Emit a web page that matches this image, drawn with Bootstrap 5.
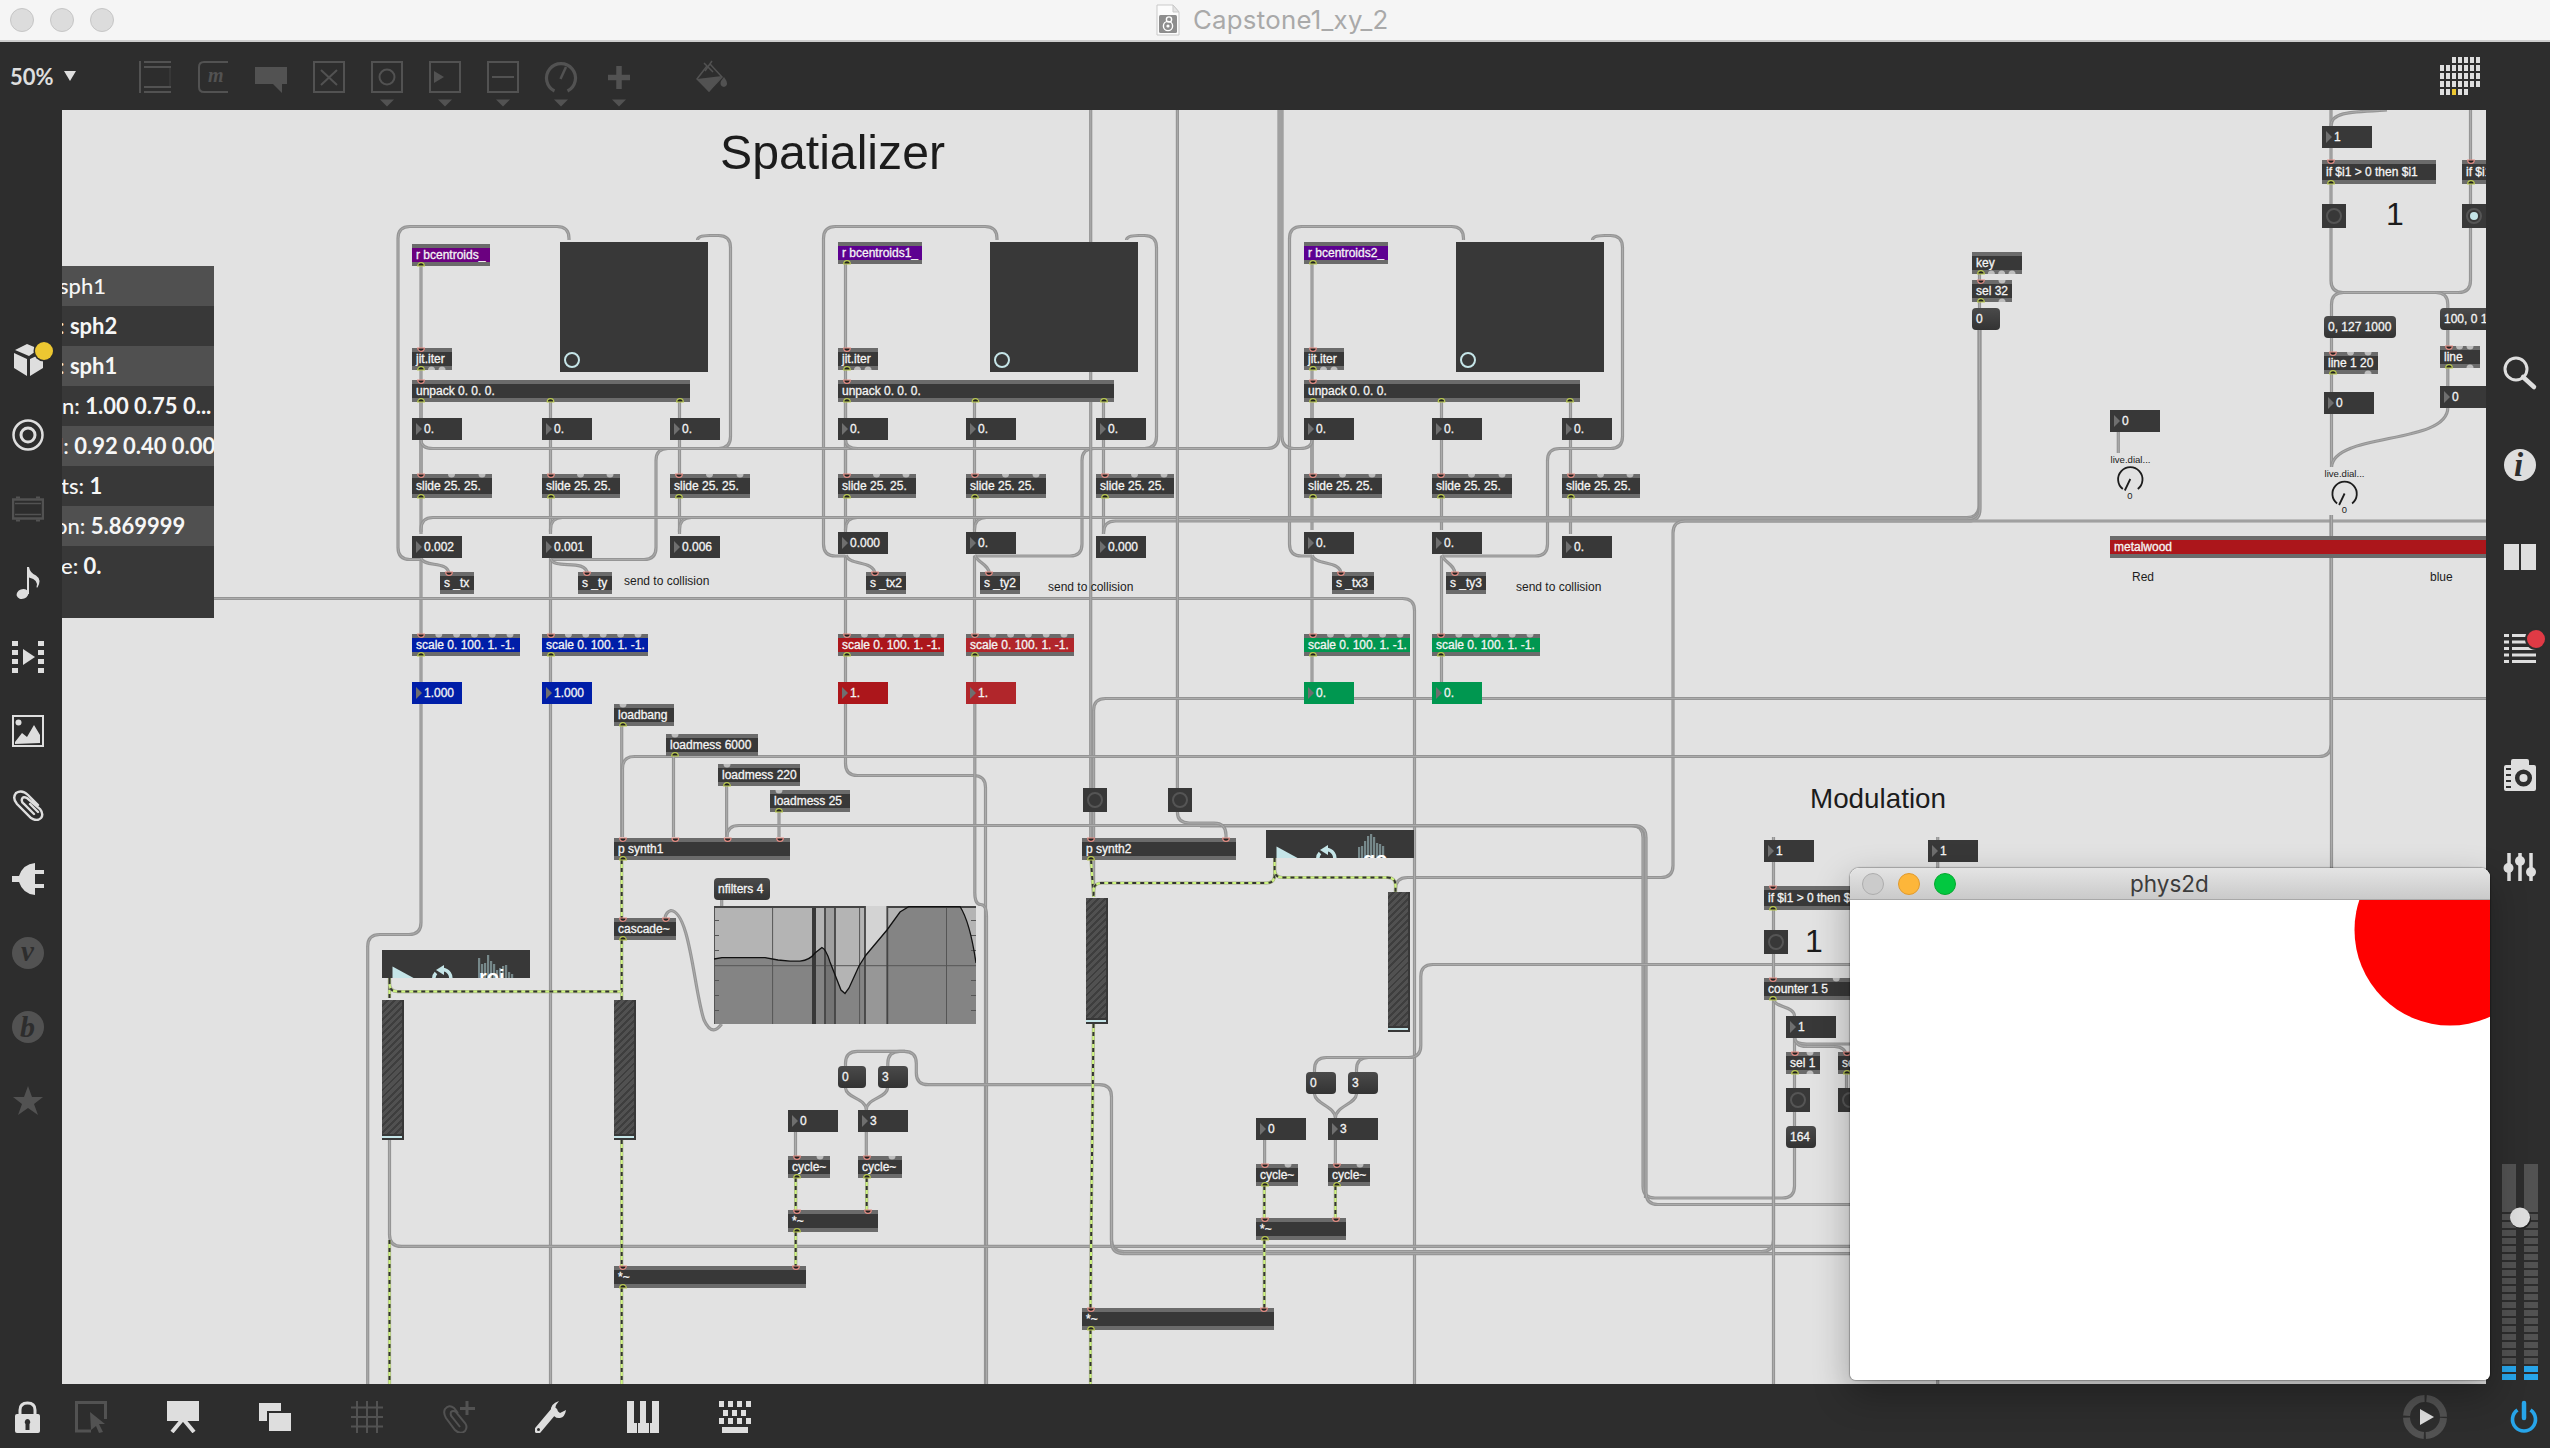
<!DOCTYPE html>
<html lang="en">
<head>
<meta charset="utf-8">
<title>Capstone1_xy_2</title>
<link rel="stylesheet" href="https://cdn.jsdelivr.net/npm/bootstrap@5.3.0/dist/css/bootstrap.min.css">
<script src="https://cdn.jsdelivr.net/npm/bootstrap@5.3.0/dist/js/bootstrap.bundle.min.js"></script>
<style>
  html, body { height: 100%; }
  body { background: #2d2d2d; font-family: "Liberation Sans", Arial, sans-serif; overflow: hidden; }
  svg { display: block; flex: none; }
  .lite { color: #dedede; }
  .dim { color: #525252; }
  .titlebar { height: 42px; background: #f5f5f5; border-bottom: 2px solid #cdcdcd; padding: 0 10px; }
  .light { width: 24px; height: 24px; border-radius: 50%; background: #dcdcdc; border: 1px solid #c6c6c6; }
  .doc-name { font: 400 25.800px "Inter", sans-serif; color: #a9a9a9; line-height: 40px; letter-spacing: .25px; }
  .title-lights { width: 1145px; gap: 16px; }
  .toolbar { height: 68px; padding-left: 10px; padding-right: 70px; }
  .zoom-label { font: 700 22px "Lato", sans-serif; color: #dedede; width: 54px; }
  .tool-icons { gap: 26px; margin-left: 63px; }
  .tool-icons svg { overflow: visible; }
  .bucket { margin-left: 34px; }
  .left-rail { width: 62px; padding-top: 235px; padding-left: 12px; gap: 42px; }
  .right-rail { width: 64px; padding-left: 18px; }
  .bottombar { height: 64px; padding-left: 12px; padding-right: 10px; padding-top: 2px; }
  .bottom-icons { gap: 60px; }
  .lock-icon { margin-right: -29px; }
  .power-icon { margin-left: 63px; }
  .patcher { background: #e2e2e2; overflow: hidden; }
  .obj { position: absolute; color: #f4f4f4; font-size: 12px; line-height: 14px; white-space: pre; background: #383838; border-top: 4px solid #6b6b6b; border-bottom: 4px solid #6b6b6b; padding-left: 4px; -webkit-text-stroke: .3px #f4f4f4; overflow: hidden; }
  .obj.tall { line-height: 16px; }
  .num { position: absolute; height: 22px; width: 50px; color: #f4f4f4; font-size: 12px; line-height: 22px; padding-left: 12px; background: #383838; -webkit-text-stroke: .3px #f4f4f4; }
  .num::before { content: ""; position: absolute; left: 4px; top: 5px; border-left: 6px solid #6f6f6f; border-top: 6px solid transparent; border-bottom: 6px solid transparent; }
  .msg { position: absolute; height: 22px; color: #f4f4f4; font-size: 12px; line-height: 22px; padding-left: 4px; border-radius: 4px; background: linear-gradient(#4a4a4a, #333); white-space: pre; -webkit-text-stroke: .3px #f4f4f4; }
  .bang { position: absolute; width: 24px; height: 24px; background: #383838; }
  .bang::before { content: ""; position: absolute; inset: 4px; border: 2px solid #555; border-radius: 50%; }
  .bang.lit::after { content: ""; position: absolute; inset: 8px; background: #c5e5e8; border-radius: 50%; }
  .pad { position: absolute; width: 148px; height: 130px; background: #383838; }
  .pad::before { content: ""; position: absolute; left: 4px; bottom: 4px; width: 16px; height: 16px; border: 2px solid #c5e5e8; border-radius: 50%; }
  .gain { position: absolute; width: 22px; background: #383838; }
  .gain::before { content: ""; position: absolute; left: 0; top: 0; width: 20px; bottom: 6px; background: repeating-linear-gradient(135deg, #515151 0 3px, #3e3e3e 3px 5px); }
  .gain::after { content: ""; position: absolute; left: 0; bottom: 2px; width: 20px; height: 2px; background: #c5e5e8; }
  .note { position: absolute; color: #1c1c1c; white-space: pre; line-height: 1; }
  .purple { background: #6b0080; } .violet { background: #5d0091; }
  .blue { background: #001ea8; } .red { background: #ac161b; } .red2 { background: #b1262b; } .green { background: #009750; }
  .layer { position: absolute; left: 0; top: 0; }
  .attrs { position: absolute; left: 0; top: 156px; width: 152px; height: 352px; background: #383838; overflow: hidden; font: 700 22px/40px "Lato", sans-serif; color: #f6f6f6; }
  .attrs > div { height: 40px; white-space: pre; }
  .attrs > div:nth-child(odd) { background: #505050; }
  .attrs > div:last-child { background: none; }
  .attrs i { font-style: normal; font-weight: 500; }
  .attrs span { display: inline-block; margin-left: -3px; }
  .attrs .cut-0 { margin-left: 0; } .attrs .cut-1 { margin-left: -1px; } .attrs .cut-4 { margin-left: -4px; } .attrs .cut-7 { margin-left: -7px; }
  .sub-window { position: absolute; left: 1850px; top: 868px; width: 640px; height: 512px; background: #fff; border-radius: 9px 9px 6px 6px; overflow: hidden; }
  .win-shadow { position: absolute; left: 1850px; top: 868px; width: 640px; height: 512px; border-radius: 9px 9px 6px 6px; box-shadow: 0 14px 36px rgba(0,0,0,.3), 0 0 1px 1px rgba(0,0,0,.25); }
  .sub-title { height: 32px; background: linear-gradient(#e4e4e4, #cacaca); border-bottom: 1px solid #a8a8a8; padding-left: 12px; gap: 14px; }
  .sub-title .light { width: 22px; height: 22px; background: #cbcbcb; border-color: #adadad; }
  .sub-title .light.amber { background: #fdb63a; border-color: #e09a2e; }
  .sub-title .light.go { background: #02c840; border-color: #06a82f; }
  .sub-name { font: 400 22.5px "Inter", sans-serif; color: #3c3c3c; margin-left: 160px; line-height: 30px; }
</style>
</head>
<body class="d-flex flex-column">

<header class="titlebar d-flex align-items-center flex-shrink-0">
  <div class="title-lights d-flex"><span class="light"></span><span class="light"></span><span class="light"></span></div>
  <svg width="26" height="32" viewBox="0 0 26 32" class="ms-0"><path d="M2 1h16l6 7v23H2z" fill="#fcfcfc" stroke="#c9c9c9"/><path d="M18 1v7h6z" fill="#e4e4e4" stroke="#c9c9c9"/><rect x="4" y="11" width="18" height="18" rx="1.500" fill="#8e8e8e"/><g fill="none" stroke="#fff" stroke-width="1.400"><circle cx="13" cy="22" r="4.600"/><circle cx="14" cy="15.500" r="2.600"/></g><circle cx="13" cy="22" r="1.600" fill="#fff"/></svg>
  <span class="doc-name ms-2 ps-1">Capstone1_xy_2</span>
</header>

<nav class="toolbar d-flex align-items-center flex-shrink-0">
  <span class="zoom-label">50%</span>
  <svg width="12" height="10" class="lite"><path d="M0 0h12L6 10z" fill="currentColor"/></svg>
  <div class="tool-icons d-flex dim">
    <svg width="32" height="47" viewBox="0 -8 32 47" fill="none" stroke="currentColor" stroke-width="2"><path d="M1 0v32M5 1h27M5 6h27M5 26h27M5 31h27" /><path d="M31 6v20" stroke-width=".6"/></svg>
    <svg width="32" height="47" viewBox="0 -8 32 47"><path d="M31 1H7Q2 1 2 6v20q0 5 5 5h24" fill="none" stroke="currentColor" stroke-width="2"/><text x="11" y="21" font-family="Liberation Serif, serif" font-style="italic" font-weight="700" font-size="20" fill="currentColor">m</text></svg>
    <svg width="32" height="47" viewBox="0 -8 32 47" fill="currentColor"><path d="M0 6h32v17h-5v9l-9-9H0z"/></svg>
    <svg width="32" height="47" viewBox="0 -8 32 47" fill="none" stroke="currentColor" stroke-width="2"><path d="M1 1h30v30H1zM8 9l16 15M24 9L8 24"/></svg>
    <svg width="32" height="47" viewBox="0 -8 32 47" fill="none" stroke="currentColor" stroke-width="2"><path d="M1 1h30v30H1z"/><circle cx="16" cy="16" r="7.500"/></svg>
    <svg width="32" height="47" viewBox="0 -8 32 47" fill="none" stroke="currentColor" stroke-width="2"><path d="M1 1h30v30H1z"/><path d="M5 10l10 6-10 6z" fill="currentColor" stroke="none"/></svg>
    <svg width="32" height="47" viewBox="0 -8 32 47" fill="none" stroke="currentColor" stroke-width="2"><path d="M1 1h30v30H1zM5 16h22"/></svg>
    <svg width="32" height="47" viewBox="0 -8 32 47" fill="none" stroke="currentColor"><path d="M9.500 30A14.500 14.500 0 1 1 22.500 30" stroke-width="3.200"/><path d="M15.500 18L21 6" stroke-width="2.500"/></svg>
    <svg width="32" height="47" viewBox="0 -8 32 47"><path d="M16 5v23M5 16.500h22" stroke="currentColor" stroke-width="5.500"/></svg>
    <svg class="bucket" width="34" height="47" viewBox="0 -8 34 47"><path d="M12 5L2 18l12 12 13-14L15 3" fill="none" stroke="currentColor" stroke-width="1.500"/><path d="M2 18l25-3-13 16zM29 16q6 8 0 10-5-1-3-6z" fill="currentColor"/><path d="M9 2l9 9M17 0l-7 10" stroke="currentColor" stroke-width="1.500"/></svg>
  </div>
  <svg class="ms-auto" width="40" height="38" id="calendar"></svg>
</nav>

<div class="d-flex flex-grow-1" style="min-height:0">
  <aside class="left-rail d-flex flex-column flex-shrink-0 lite">
    <svg width="42" height="32" viewBox="0 0 42 32" overflow="visible"><path d="M2 8l13 6v17L2 23zM18 14l13-6v15l-13 8zM3 5l12-6 12 5-10 7z" fill="currentColor"/><circle cx="32" cy="6" r="10.500" fill="#2d2d2d"/><circle cx="32" cy="6" r="9" fill="#ecc731"/></svg>
    <svg width="32" height="32" fill="none" stroke="currentColor"><circle cx="16" cy="16" r="14.500" stroke-width="2.500"/><circle cx="16" cy="16" r="7" stroke-width="3"/></svg>
    <svg width="32" height="32" class="dim" fill="none" stroke="currentColor"><path d="M1 6.500h30v19H1z" stroke-width="2.500"/><path d="M3 10.500h26M3 21.500h26" stroke-width="1.500"/><path d="M4 4.500h4M24 4.500h4M4 27.500h4M24 27.500h4" stroke-width="2"/></svg>
    <svg width="32" height="32" fill="currentColor"><ellipse cx="10.500" cy="27" rx="6" ry="4.800" transform="rotate(-20 10.500 27)"/><path d="M15 27V0h2q1 6 7 8.500 6 4 1.500 12-.5.300-1-.3Q27 13 17 10.500V27z"/></svg>
    <svg width="32" height="32" fill="currentColor"><path d="M0 0h6v5H0zM0 9h6v5H0zM0 18h6v5H0zM0 27h6v5H0zM26 0h6v5h-6zM26 9h6v5h-6zM26 18h6v5h-6zM26 27h6v5h-6zM11 8l12 8-12 8z"/></svg>
    <svg width="32" height="32"><path d="M1 1h30v30H1z" fill="none" stroke="currentColor" stroke-width="2"/><path d="M3 29V27l7-9 5 4 7-12 6 10v8z" fill="currentColor"/><circle cx="6.500" cy="7.500" r="3" fill="currentColor"/></svg>
    <svg width="32" height="32" fill="none" stroke="currentColor" stroke-width="2.400" stroke-linecap="round"><path d="M26 16L16 6Q10 0 4 4q-4 5 1 11l14 14q6 4 10 0 3-4-1-9L15 9q-4-2-5 1-1 3 2 5l10 10M18 15l8 8"/></svg>
    <svg width="32" height="32" fill="currentColor"><path d="M0 13h7Q11 1 23 0v7h9v4h-9v10h9v4h-9v7Q11 31 7 19H0z"/></svg>
    <svg width="32" height="32" class="dim"><circle cx="16" cy="16" r="16" fill="currentColor"/><text x="9" y="24" font-family="Liberation Serif, serif" font-style="italic" font-weight="700" font-size="29" fill="#2d2d2d">v</text></svg>
    <svg width="32" height="32" class="dim"><circle cx="16" cy="16" r="16" fill="currentColor"/><text x="8" y="26" font-family="Liberation Serif, serif" font-style="italic" font-weight="700" font-size="30" fill="#2d2d2d">b</text></svg>
    <svg width="32" height="32" class="dim"><path d="M16 1l4 11h11l-9 7 4 11-10-7-10 7 4-11-9-7h11z" fill="currentColor"/></svg>
  </aside>

  <main class="patcher position-relative flex-grow-1" id="patcher">
    <svg class="layer" width="2424" height="1274" viewBox="62 110 2424 1274" id="cords"></svg>
    <div id="boxes"></div>
    <div class="attrs" id="attrs">
      <div><span><i>sph1</i></span></div>
      <div><span><i>:</i> sph2</span></div>
      <div><span><i>:</i> sph1</span></div>
      <div><span class="cut-0"><i>n:</i> 1.00 0.75 0...</span></div>
      <div><span class="cut-4"><i>l:</i> 0.92 0.40 0.00</span></div>
      <div><span class="cut-1"><i>ts:</i> 1</span></div>
      <div><span class="cut-7"><i>on:</i> 5.869999</span></div>
      <div><span class="cut-1"><i>e:</i> 0.</span></div>
    </div>
  </main>

  <aside class="right-rail d-flex flex-column flex-shrink-0 lite">
    <svg width="46" height="1274" viewBox="2504 110 46 1274" fill="currentColor" id="rail">
      <circle cx="2516" cy="369" r="11" fill="none" stroke="currentColor" stroke-width="3"/><path d="M2523 377l11 10" stroke="currentColor" stroke-width="4.500" stroke-linecap="round"/>
      <circle cx="2520" cy="465" r="16"/><text x="2514" y="476" font-family="Liberation Serif, serif" font-style="italic" font-weight="700" font-size="33" fill="#2d2d2d">i</text>
      <path d="M2504 544h15v26h-15zM2521 544h15v26h-15z"/>
      <path d="M2504 634h5v3h-5zM2512 634h24v3h-24zM2504 640.500h5v3h-5zM2512 640.500h24v3h-24zM2504 647h5v3h-5zM2512 647h24v3h-24zM2504 653.500h5v3h-5zM2512 653.500h24v3h-24zM2504 660h5v3h-5zM2512 660h24v3h-24z"/><circle cx="2536" cy="639" r="11" fill="#2d2d2d"/><circle cx="2536" cy="639" r="9" fill="#e03a45"/>
      <path d="M2504 767q0-2 2-2h5v-4q0-2 2-2h14q2 0 2 2v4h5q2 0 2 2v22q0 2-2 2h-28q-2 0-2-2z"/><circle cx="2523.500" cy="778" r="6.300" fill="none" stroke="#2d2d2d" stroke-width="4.500"/><path d="M2506 769h5M2506 775h5M2506 781h5M2506 787h5" stroke="#2d2d2d" stroke-width="2"/>
      <path d="M2509 853v28M2520 853v28M2531 853v28" stroke="currentColor" stroke-width="3.500"/><circle cx="2508.500" cy="868" r="5"/><circle cx="2520" cy="861" r="5"/><circle cx="2531" cy="872" r="5"/>
    </svg>
  </aside>
</div>

<footer class="bottombar d-flex align-items-center flex-shrink-0 lite">
  <div class="bottom-icons d-flex">
    <svg class="lock-icon" width="32" height="32"><path d="M8 15V9q0-7 7.500-7T23 9v6" fill="none" stroke="currentColor" stroke-width="3"/><rect x="3" y="13" width="25" height="19" rx="2" fill="currentColor"/><path d="M15.500 18a3 3 0 0 1 2 5v6h-4v-6a3 3 0 0 1 2-5z" fill="#2d2d2d"/></svg>
    <svg width="32" height="32" class="dim"><path d="M16 30H1.500V1.500h29V18" fill="none" stroke="currentColor" stroke-width="3"/><path d="M15 11l15 12h-6l4 8-4 1-3-7-5 4z" fill="currentColor"/></svg>
    <svg width="32" height="32"><path d="M0 0h32v20H0z" fill="currentColor"/><path d="M15 19L5 31M17 19l10 12" stroke="currentColor" stroke-width="4"/></svg>
    <svg width="32" height="32" fill="currentColor"><path d="M0 2h22v8H8v10H0zM10 12h22v18H10z"/></svg>
    <svg width="32" height="32" class="dim" stroke="currentColor" stroke-width="2"><path d="M6 0v32M16 0v32M26 0v32M0 6.500h32M0 16h32M0 25.500h32"/></svg>
    <svg width="32" height="32" class="dim" fill="none" stroke="currentColor"><path d="M24 0v14M17 7.500h15" stroke-width="3"/><path d="M15 12L11 7Q6 3 2 8q-2 4 1 9l9 12q5 5 10 1 3-4 0-8l-9-11q-3-2-5 0-1 3 1 5l8 10" stroke-width="2"/></svg>
    <svg width="32" height="32"><path d="M3 29L19 10" stroke="currentColor" stroke-width="7" stroke-linecap="round"/><path d="M24 0q-9 3-8 10 3 8 9 7 5-1 6-8l-6 3-5-4 1-4z" fill="currentColor"/><circle cx="3.500" cy="28.500" r="1.500" fill="#2d2d2d"/></svg>
    <svg width="32" height="32" fill="currentColor"><path d="M0 0h7v22h3v10H0zM13 0h6v22h3v10H11V22h2zM25 0h7v32h-9V22h2z"/></svg>
    <svg width="32" height="32" fill="currentColor"><path d="M0 0h5v6H0zM9 0h5v6H9zM18 0h5v6h-5zM27 0h5v6h-5zM4 9h5v6H4zM13 9h5v6h-5zM22 9h5v6h-5zM0 17h5v6H0zM9 17h5v6H9zM18 17h5v6h-5zM27 17h5v6h-5zM3 26h26v6H3z"/></svg>
  </div>
  <svg class="ms-auto" width="44" height="44"><circle cx="22" cy="22" r="18.500" fill="none" stroke="#525252" stroke-width="7" stroke-dasharray="27 2.060" stroke-dashoffset="-1.030"/><path d="M17 14l14 8-14 8z" fill="currentColor"/></svg>
  <svg class="power-icon" width="30" height="34"><path d="M8.500 8A11.500 11.500 0 1 0 21.500 8" transform="translate(-1 2)" fill="none" stroke="#27a5ea" stroke-width="3.600"/><path d="M14 3v15" stroke="#27a5ea" stroke-width="4.500" stroke-linecap="round"/></svg>
</footer>

<div class="win-shadow"></div>
<section class="sub-window">
  <div class="sub-title d-flex align-items-center"><span class="light"></span><span class="light amber"></span><span class="light go"></span><span class="sub-name">phys2d</span></div>
  <svg width="640" height="480"><circle cx="600" cy="30" r="95.500" fill="#f00"/></svg>
</section>

<script>
const OX = 62, OY = 110;
const boxes = document.getElementById('boxes');
const jacks = [];

function add(cls, x, y, w, h, text) {
  const d = document.createElement('div');
  d.className = cls;
  d.style.left = (x - OX) + 'px';
  d.style.top = (y - OY) + 'px';
  if (w) d.style.width = w + 'px';
  if (h) d.style.height = h + 'px';
  if (text != null) d.textContent = text;
  boxes.appendChild(d);
  return d;
}
// An object box; ins and outs list its jacks: x is patched, - is free.
function obj(x, y, w, text, ins, outs, color, h) {
  h = h || 22;
  add('obj ' + (color || '') + (h > 22 ? ' tall' : ''), x, y, w, h, text);
  [[ins, y, 1], [outs, y + h, 0]].forEach(([s, jy, isIn]) => {
    s = s || '';
    for (let i = 0; i < s.length; i++) {
      const jx = x + 9 + (s.length > 1 ? i * (w - 19) / (s.length - 1) : 0);
      const sweep = isIn ? 0 : 1;
      if (s[i] === '-') jacks.push(`<path d="M${jx - 3.5} ${jy}a3.5 3.5 0 0 ${sweep} 7 0z" fill="#bdbdbd"/>`);
      else jacks.push(`<path d="M${jx - 3.3} ${jy}a3.3 3.3 0 0 ${sweep} 6.600 0z" fill="#222" stroke="${isIn ? '#e58d84' : '#b9c94f'}" stroke-width="1.200"/>`);
    }
  });
}
const num = (x, y, t, c) => add('num ' + (c || ''), x, y, 0, 0, t);
const msg = (x, y, w, t) => add('msg', x, y, w, 0, t);
const bang = (x, y, c) => add('bang ' + (c || ''), x, y);
const note = (x, y, size, t) => { const d = add('note', x, y - size / 2, 0, 0, t); d.style.fontSize = size + 'px'; };

// three tracking columns
const groups = [
  { rx: 'r bcentroids_', ry: 244, rw: 78, rc: 'purple', pad: 560, x: [412, 542, 670], uw: 278, v: ['0.002', '0.001', '0.006'], vy: [536, 536, 536], s: [[440, 34, 's _tx'], [578, 34, 's _ty']], note: [624, 581], sw: [108, 106], c: ['blue', 'blue'], n: '1.000', slw: [80, 78, 80] },
  { rx: 'r bcentroids1_', ry: 242, rw: 84, rc: 'violet', pad: 990, x: [838, 966, 1096], uw: 276, v: ['0.000', '0.', '0.000'], vy: [532, 532, 536], s: [[866, 40, 's _tx2'], [980, 40, 's _ty2']], note: [1048, 587], sw: [106, 108], c: ['red', 'red2'], n: '1.', slw: [78, 80, 78] },
  { rx: 'r bcentroids2_', ry: 242, rw: 84, rc: 'violet', pad: 1456, x: [1304, 1432, 1562], uw: 276, v: ['0.', '0.', '0.'], vy: [532, 532, 536], s: [[1332, 42, 's _tx3'], [1446, 40, 's _ty3']], note: [1516, 587], sw: [106, 108], c: ['green', 'green'], n: '0.', slw: [78, 80, 78] }
];
groups.forEach(g => {
  obj(g.x[0], g.ry, g.rw, g.rx, '', 'x', g.rc);
  add('pad', g.pad, 242);
  obj(g.x[0], 348, 40, 'jit.iter', 'x', 'x--');
  obj(g.x[0], 380, g.uw, 'unpack 0. 0. 0.', 'x', 'xxx');
  g.x.forEach((x, i) => {
    num(x, 418, '0.');
    obj(x, 474, g.slw[i], 'slide 25. 25.', 'x--', 'x', '', 24);
    num(x, g.vy[i], g.v[i]);
  });
  g.s.forEach(s => obj(s[0], 572, s[1], s[2], 'x', ''));
  note(g.note[0], g.note[1], 12, 'send to collision');
  [0, 1].forEach(i => {
    obj(g.x[i], 634, g.sw[i], 'scale 0. 100. 1. -1.', 'x-----', 'x', g.c[i]);
    num(g.x[i], 682, g.n, g.c[i]);
  });
});

// left synth
obj(614, 704, 60, 'loadbang', '-', 'x');
obj(666, 734, 92, 'loadmess 6000', '-', 'x');
obj(718, 764, 82, 'loadmess 220', '-', 'x');
obj(770, 790, 80, 'loadmess 25', '-', 'x');
obj(614, 838, 176, 'p synth1', 'xxxx', 'x');
obj(614, 918, 62, 'cascade~', 'xx', 'x');
msg(714, 878, 56, 'nfilters 4');
add('gain', 382, 1000, 0, 140); add('gain', 614, 1000, 0, 140);
msg(838, 1066, 28, '0'); msg(878, 1066, 30, '3');
num(788, 1110, '0'); num(858, 1110, '3');
obj(788, 1156, 42, 'cycle~', 'x-', 'x'); obj(858, 1156, 44, 'cycle~', 'x-', 'x');
obj(788, 1210, 90, '*~', 'xx', 'x');
obj(614, 1266, 192, '*~', 'xx', 'x');

// right synth
bang(1083, 788); bang(1168, 788);
obj(1082, 838, 154, 'p synth2', 'xx', 'x');
add('gain', 1086, 898, 0, 126); add('gain', 1388, 892, 0, 140);
msg(1306, 1072, 30, '0'); msg(1348, 1072, 30, '3');
num(1256, 1118, '0'); num(1328, 1118, '3');
obj(1256, 1164, 42, 'cycle~', 'x-', 'x'); obj(1328, 1164, 42, 'cycle~', 'x-', 'x');
obj(1256, 1218, 90, '*~', 'xx', 'x');
obj(1082, 1308, 192, '*~', 'xx', 'x');

// modulation
num(1764, 840, '1'); num(1928, 840, '1');
obj(1764, 886, 114, 'if $i1 > 0 then $i1', 'x', 'x', '', 24);
bang(1764, 930);
obj(1764, 978, 272, 'counter 1 5', 'x----', 'x');
num(1786, 1016, '1');
obj(1786, 1052, 34, 'sel 1', 'x-', 'x-'); obj(1838, 1052, 34, 'sel 2', 'x-', 'x-');
bang(1786, 1088); bang(1838, 1088);
msg(1786, 1126, 30, '164');

// key and dial section
obj(1972, 252, 50, 'key', '', 'x---');
obj(1972, 280, 40, 'sel 32', 'x-', 'x-');
msg(1972, 308, 28, '0');
num(2110, 410, '0');
num(2322, 126, '1');
obj(2322, 160, 114, 'if $i1 > 0 then $i1', 'x', 'x', '', 24);
obj(2462, 160, 114, 'if $i1 > 0 then $i1', 'x', 'x', '', 24);
bang(2322, 204); bang(2462, 204, 'lit');
msg(2324, 316, 72, '0, 127 1000'); msg(2440, 308, 72, '100, 0 1000');
obj(2324, 352, 54, 'line 1 20', 'x--', 'x-'); obj(2440, 346, 40, 'line', 'x--', 'x-');
num(2324, 392, '0'); num(2440, 386, '0');
obj(2110, 536, 420, 'metalwood', '', '', 'red');

note(720, 152, 48.2, 'Spatializer'); note(1810, 799, 27.8, 'Modulation');
note(1805, 941, 32, '1'); note(2386, 214, 32, '1');
note(2132, 577, 12, 'Red'); note(2430, 577, 12, 'blue');
note(2110.5, 460, 9.6, 'live.dial...'); note(2324.5, 474, 9.6, 'live.dial...');
note(2127.3, 496, 9.4, '0'); note(2341.8, 510, 9.4, '0');

// Patch cords: corner() rounds every bend of a polyline.
function corner(pts, r) {
  let d = `M${pts[0][0]} ${pts[0][1]}`;
  for (let i = 1; i < pts.length - 1; i++) {
    const [a, b, c] = [pts[i - 1], pts[i], pts[i + 1]];
    const la = Math.hypot(a[0] - b[0], a[1] - b[1]), lc = Math.hypot(c[0] - b[0], c[1] - b[1]);
    const ra = Math.min(r, i > 1 ? la / 2 : la), rc = Math.min(r, i < pts.length - 2 ? lc / 2 : lc);
    d += `L${b[0] + (a[0] - b[0]) * ra / la} ${b[1] + (a[1] - b[1]) * ra / la}Q${b[0]} ${b[1]} ${b[0] + (c[0] - b[0]) * rc / lc} ${b[1] + (c[1] - b[1]) * rc / lc}`;
  }
  const e = pts[pts.length - 1];
  return d + `L${e[0]} ${e[1]}`;
}
let wires = '';
const path = d => wires += `<path d="${d}" stroke="#959595" stroke-width="3.200"/><path d="${d}" stroke="#ababab" stroke-width="1"/>`;
const w = (...p) => path(corner(p, 12));
const sig = (...p) => { const d = corner(p, 8); wires += `<path d="${d}" stroke="#a3a78c" stroke-width="3.200"/><path d="${d}" stroke="#cdf47e" stroke-width="2"/><path d="${d}" stroke="#333" stroke-width="2" stroke-dasharray="4 4"/>`; };

const cols = [[421, 550.5, 679.5], [845.5, 974.5, 1103.5], [1312, 1441.500, 1570.500]];
cols.forEach((c, g) => {
  const vy = groups[g].vy;
  w([c[0], 264], [c[0], 474]);
  c.forEach((x, i) => { w([x, 400], [x, 474]); w([x, 498], [x, vy[i] - 2]); });
  [0, 1].forEach(i => w([c[i], 556], [c[i], 682]));
});
[[398, 569, 421, 559.5], [823.5, 997, 845.5, 556], [1289.500, 1463.500, 1312, 556]].forEach(([l, r, e, b]) => w([r, 240], [r, 226.500], [l, 226.500], [l, b], [e, b]));
[[697.500, 730.500, 656, 559.500, 551], [1126.500, 1156.500, 1082, 556, 975], [1592.500, 1622.500, 1547.500, 556, 1442]].forEach(([a, r, m, b, e]) => w([a, 240], [a, 235.500], [r, 235.500], [r, 448.500], [m, 448.500], [m, b], [e, b]));
w([421, 440], [421, 448.500], [1279, 448.500], [1279, 110]);
w([845.500, 440], [845.500, 448.500], [900, 448.500]);
w([1312, 440], [1312, 448.500], [1282, 448.500], [1282, 110]);
[421, 550.500, 679.500, 845.500, 974.500].forEach(x => w([x, 532], [x, 517.500], [x + 40, 517.500]));
w([440, 517.500], [1979, 517.500], [1979, 330]);
w([1250, 519], [1979.500, 519], [1979.500, 330]);
w([1103.500, 534], [1103.500, 521], [1980, 521], [1980, 330]);
w([1395.500, 892], [1395.500, 877.500], [1673, 877.500], [1673, 521], [2486, 521]);
w([214, 598.500], [1414.500, 598.500], [1414.500, 1384]);
w([1090.700, 110], [1090.700, 838]);
w([1177.400, 110], [1177.400, 788]);
w([2486, 698.500], [1093.600, 698.500], [1093.600, 897]);
// sends
path('M421 558C424 568 448 560 449 574'); path('M551 559C554 570 586 558 587.500 574');
path('M846 555C849 566 874 560 875 574'); path('M975 555C976 562 989 564 989.500 574');
path('M1312 555C1315 566 1341 560 1341 574'); path('M1442 555C1443 562 1455 564 1455 574');
// left synth
w([421, 704], [421, 934.500], [367.700, 934.500], [367.700, 1384]);
w([550.500, 704], [550.500, 1384]);
w([845.500, 704], [845.500, 775.500], [985.500, 775.500], [985.500, 1384]);
w([974.800, 704], [974.800, 904.500], [986.500, 904.500], [986.500, 1384]);
w([621.700, 726], [621.700, 837]);
w([622.500, 837], [622.500, 756.500], [2331, 756.500], [2331, 515]);
w([673.500, 756], [673.500, 837]); w([726.600, 786], [726.600, 837]); w([779, 812], [779, 837]);
w([727, 837], [727, 825.500], [1643, 825.500], [1643, 1198], [1794.500, 1198], [1794.500, 1148]);
w([1200, 826], [1645.500, 826], [1645.500, 1198]);
w([1200, 825.500], [1646, 825.500], [1646, 1204.500], [1860, 1204.500]);
w([721.700, 900], [721.700, 906]);
path('M721.700 1024C717 1030 711 1035 704 1020C694 990 690 912 671 910.500Q666 912 665 918');
w([389.500, 1140], [389.500, 1246.400], [1860, 1246.400]);
w([795.500, 1132], [795.500, 1156]); w([866.300, 1132], [866.300, 1156]);
path('M845.500 1088C846 1098 866 1098 866.300 1110C866.500 1098 887 1098 887.500 1088');
w([887.800, 1066], [887.800, 1051.300], [905, 1051.300]);
w([845.500, 1066], [845.500, 1051.300], [916.300, 1051.300], [916.300, 1084.700], [1111.500, 1084.700], [1111.500, 1251.500], [1773.500, 1251.500], [1773.500, 1180]);
w([1111.500, 1200], [1111.500, 1253.600], [1860, 1253.600]);
// right synth
w([1177.400, 812], [1177.400, 823], [1226, 823], [1226, 838]);
w([1356.500, 1072], [1356.500, 1057.500], [1375, 1057.500]);
w([1314.500, 1072], [1314.500, 1057.500], [1420.800, 1057.500], [1420.800, 964.500], [1860, 964.500]);
path('M1314.500 1094C1315 1104 1335 1106 1335.400 1118C1335.600 1106 1356 1104 1356.500 1094');
w([1264.600, 1140], [1264.600, 1164]); w([1335.400, 1140], [1335.400, 1164]);
// modulation
w([1773.500, 837], [1773.500, 1384]); w([1937.700, 837], [1937.700, 1384]);
path('M1773.500 1000C1776 1008 1794 1006 1794.500 1016');
w([1794.500, 1038], [1794.500, 1126]);
w([1794.500, 1038], [1794.500, 1044], [1860, 1044]); w([1794.500, 1036], [1794.500, 1046.500], [1846.500, 1046.500], [1846.500, 1088]);
// key and dials
w([1979.500, 274], [1979.500, 400]);
w([2118.300, 432], [2118.300, 453]);
w([2331, 110], [2331, 204]); w([2470.500, 110], [2470.500, 204]);
path('M2331 126C2331 112 2350 112 2387 110');
w([2331, 228], [2331, 292.500], [2470.500, 292.500], [2470.500, 228]);
w([2331.500, 316], [2331.500, 292.500], [2447.800, 292.500], [2447.800, 386]);
w([2331.500, 338], [2331.500, 467]);
path('M2447.800 408C2447 445 2334 432 2331.500 467');
w([2331.500, 515], [2331.500, 900]);
// audio cords
sig([621.700, 860], [621.700, 918]); sig([621.700, 940], [621.700, 1000]);
sig([621.700, 1140], [621.700, 1266]); sig([621.700, 1288], [621.700, 1384]);
sig([389.500, 978], [389.500, 998]); sig([389.500, 980], [389.500, 991.600], [621.700, 991.600]);
sig([389.500, 1240], [389.500, 1384]);
sig([795.700, 1178], [795.700, 1210]); sig([866.700, 1178], [866.700, 1210]); sig([795.700, 1232], [795.700, 1266]);
sig([1091, 860], [1093.600, 897]);
sig([1274.600, 858], [1274.600, 883], [1093.600, 883], [1093.600, 895]);
sig([1274.600, 858], [1274.600, 877.500], [1395.500, 877.500], [1395.500, 892]);
sig([1093.500, 1024], [1091.500, 1200], [1090.500, 1308]); sig([1090.500, 1330], [1090.500, 1384]);
sig([1264.300, 1186], [1264.300, 1218]); sig([1335.400, 1186], [1335.400, 1218]); sig([1264.300, 1240], [1264.300, 1308]);
document.getElementById('cords').innerHTML = `<g fill="none">${wires}</g>`;

// Overlay: jacks, dials, filter response, players
const wave = (x, hs) => hs.map((h, i) => `<rect x="${x + i * 3}" y="${28 - h}" width="2.200" height="${h}" fill="#76888a"/>`).join('');
const player = (x, y, tx, ty, t, wx, hs) => `<svg x="${x}" y="${y}" width="148" height="28" viewBox="0 0 148 28"><rect width="148" height="28" fill="#383838"/><path d="M10.500 16.500l22 12h-22z" fill="#c5e5e8"/><path d="M52 30a8 8 0 0 1 2-7M60 19.500a8.500 8.500 0 0 1 8 12" fill="none" stroke="#c5e5e8" stroke-width="3.500"/><path d="M62 15v10l-8-5z" fill="#c5e5e8"/>${wave(wx, hs)}<text x="${tx}" y="${ty}" font-family="Liberation Sans, sans-serif" font-weight="700" font-size="20" fill="#fff">${t}</text></svg>`;
const dial = (x, y) => `<path d="M${x - 7.500} ${y + 10}A12.200 12.200 0 1 1 ${x + 7.500} ${y + 10}M${x} ${y}l-5.500 11.500" fill="none" stroke="#1c1c1c" stroke-width="1.800"/>`;
const curve = 'M714 959L722 957.600H765L778 960L790 961.200H800Q810 960 815 953L822 947.600Q826 949 830 962L841 990L845 993.500L849 988L859 966L866 955L887 930L900 912L909 906.500H960Q970 922 976 963';
const graph = `<svg x="714" y="906" width="262" height="118" viewBox="714 906 262 118"><rect x="714" y="906" width="262" height="118" fill="#b4b4b4"/><rect x="825" y="906" width="10" height="118" fill="#9f9f9f"/><rect x="865" y="906" width="22" height="118" fill="#d3d3d3"/><path d="${curve}V1024H714z" fill="#848484"/><path d="M865 957L887 930V1024H865z" fill="#979797"/><path d="M825 952L835 974V1024H825z" fill="#747474"/><path d="M772.600 906v118M859.600 906v118M946.500 906v118M714 965.700h262M714.500 906v118" stroke="#555" stroke-width="1" fill="none"/><path d="M714 920.500h5M714 935.500h5M714 950.500h5M714 980.500h5M714 995.500h5M714 1010.500h5M971 920.500h5M971 935.500h5M971 950.500h5M971 980.500h5M971 995.500h5M971 1010.500h5" stroke="#555"/><path d="M814 906v118" stroke="#383838" stroke-width="4"/><path d="M825 906v118M835 906v118M865 906v118M887.300 906v118M714 907h151M887 907h89" stroke="#444" stroke-width="1.800"/><path d="${curve}" fill="none" stroke="#111" stroke-width="1.300"/></svg>`;
const overlay = document.createElementNS('http://www.w3.org/2000/svg', 'svg');
overlay.setAttribute('class', 'layer'); overlay.setAttribute('width', 2424); overlay.setAttribute('height', 1274); overlay.setAttribute('viewBox', '62 110 2424 1274');
overlay.innerHTML = jacks.join('') + dial(2130.300, 479) + dial(2344.600, 493.500) + graph
  + player(382, 950, 97, 34, 'roi', 96, [20, 14, 15, 23, 17, 14, 8, 10, 12, 13, 6, 4])
  + player(1266, 830, 97, 35.5, 'go', 92, [11, 12, 17, 22, 24, 21, 15, 14, 12]);
boxes.appendChild(overlay);

// calendar glyph in the toolbar
let cal = '';
for (let r = 0; r < 5; r++) for (let c = 0; c < 7; c++) {
  if ((r === 0 && c < 2) || (r === 4 && c > 4)) continue;
  cal += `<rect x="${c * 6}" y="${r * 8}" width="4" height="6" fill="${r === 4 && c === 2 ? '#ecc731' : '#dedede'}"/>`;
}
document.getElementById('calendar').innerHTML = cal;
// drop-down arrows below five of the tool icons
document.querySelectorAll('.tool-icons svg').forEach((s, i) => {
  if (i > 3 && i < 9) s.insertAdjacentHTML('beforeend', '<path d="M9 38.500h14l-7 7z" fill="currentColor" stroke="none"/>');
});
// output level meter
let vu = '';
[2502, 2524].forEach(x => {
  vu += `<rect x="${x}" y="1164" width="14" height="48" fill="#525252"/>`;
  for (let i = 0; i < 21; i++) vu += `<rect x="${x}" y="${1214 + i * 8}" width="14" height="6" fill="${i > 18 ? '#27a5ea' : '#525252'}"/>`;
});
const rail = document.getElementById('rail');
rail.style.overflow = 'visible';
rail.insertAdjacentHTML('beforeend', vu + '<circle cx="2521" cy="1219" r="10" fill="#222"/><circle cx="2520" cy="1217.500" r="10" fill="#dedede"/>');
</script>
</body>
</html>
